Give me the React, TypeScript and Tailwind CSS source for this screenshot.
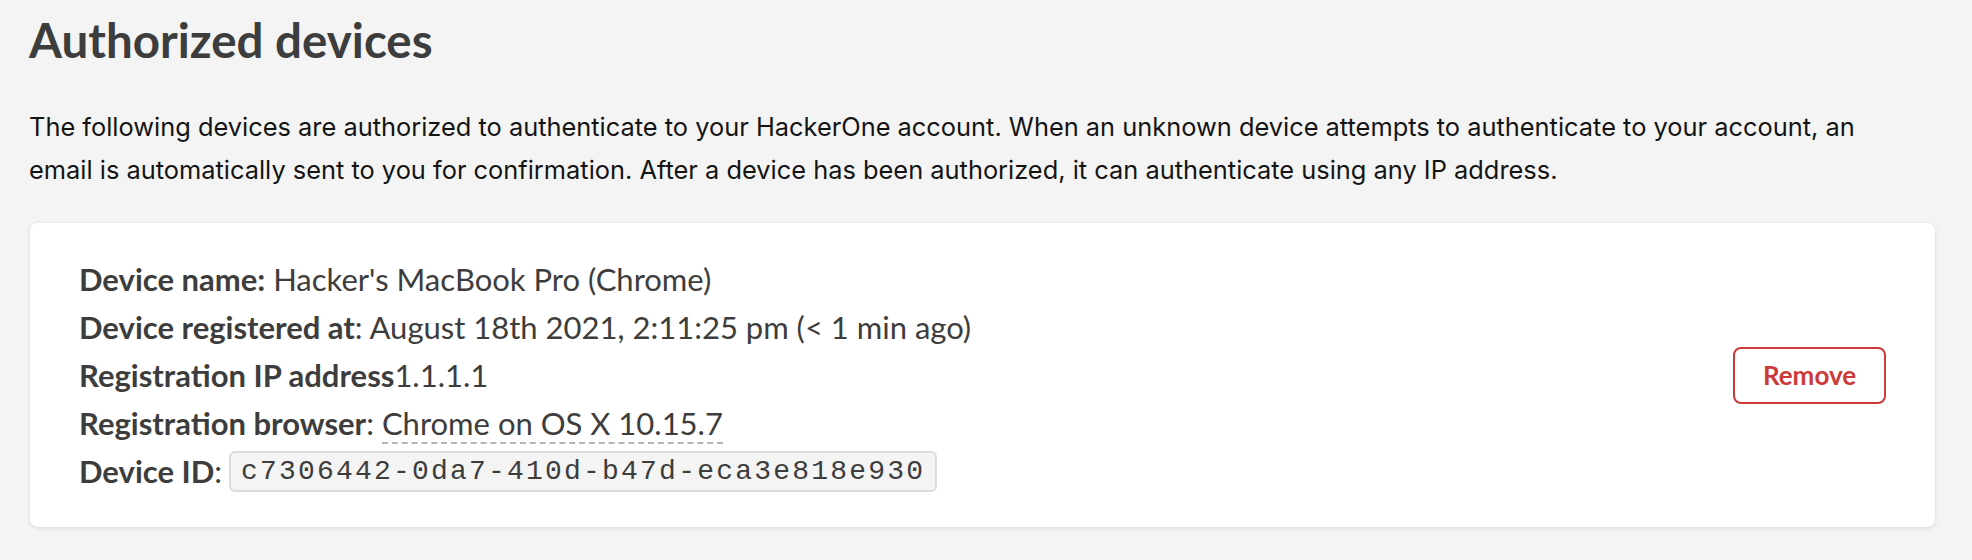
export default function App() {
  return (
    <div className="min-h-[560px] bg-[#f4f4f4] px-[29px] pt-[11px] pb-8">
      <h1 className="font-['Lato',sans-serif] text-[47.5px] font-bold leading-[58px] text-[#3d3d3d]">
        Authorized devices
      </h1>
      <p className="mt-[36px] mr-[40px] font-['Inter',sans-serif] text-[25.4px] leading-[43px] text-[#141414]">
        The following devices are authorized to authenticate to your HackerOne account. When an unknown device attempts to authenticate to your account, an email is automatically sent to you for confirmation. After a device has been authorized, it can authenticate using any IP address.
      </p>
      <div className="mt-[32px] ml-[1px] mr-[8px] flex items-center justify-between rounded-[8px] bg-white px-[49px] py-[32px] shadow-[0_1px_4px_rgba(0,0,0,0.12)] font-['Lato',sans-serif] text-[31px] leading-[48px] text-[#3d3d3d]">
        <div>
          <div>
            <span className="font-bold">Device name:</span> Hacker's MacBook Pro (Chrome)
          </div>
          <div>
            <span className="font-bold">Device registered at</span>: August 18th 2021, 2:11:25 pm (&lt; 1 min ago)
          </div>
          <div>
            <span className="font-bold">Registration IP address</span>1.1.1.1
          </div>
          <div>
            <span className="font-bold">Registration browser</span>:{" "}
            <span className="border-b-2 border-dashed border-[#b5b5b5]">Chrome on OS X 10.15.7</span>
          </div>
          <div className="flex items-center">
            <span className="font-bold">Device ID</span>:
            <code className="ml-[7px] inline-block rounded-[6px] border-2 border-[#dcdcdc] bg-[#f4f4f4] px-[10px] font-['Liberation_Mono',monospace] text-[28px] leading-[37px] tracking-[2.2px] text-[#3d3d3d]">
              c7306442-0da7-410d-b47d-eca3e818e930
            </code>
          </div>
        </div>
        <button className="h-[57px] w-[153px] rounded-[8px] border-2 border-[#cc3a3a] font-['Lato',sans-serif] text-[26px] font-bold text-[#cc3a3a]">
          Remove
        </button>
      </div>
    </div>
  );
}
